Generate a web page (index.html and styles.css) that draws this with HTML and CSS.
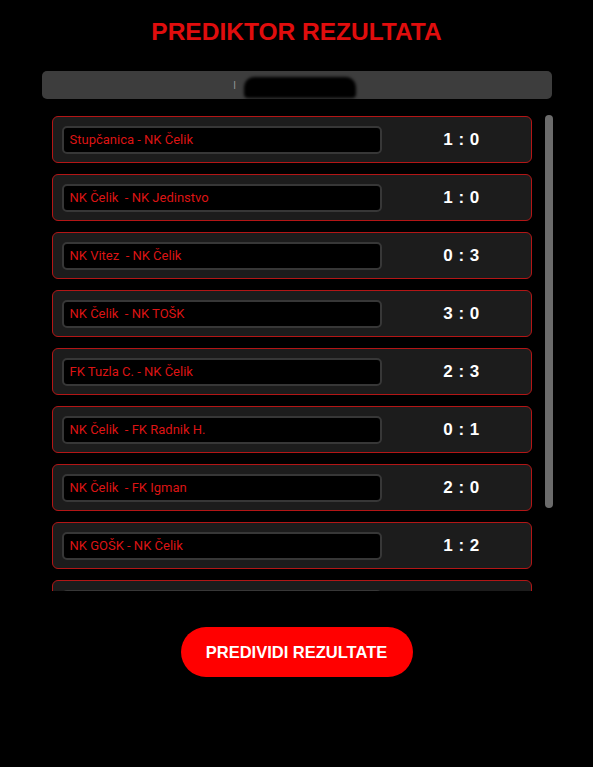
FILE: index.html
```html
<!DOCTYPE html>
<html lang="bs">
<head>
    <meta charset="UTF-8">
    <meta name="viewport" content="width=device-width, initial-scale=1.0">
    <title>Prediktor rezultata</title>
    <link rel="stylesheet" href="styles.css">
</head>
<body>
    <div class="app">
        <h1 class="title">PREDIKTOR REZULTATA</h1>
        <div class="user-bar">
            <span class="user-mark">l</span>
            <span class="user-name"></span>
        </div>
        <div class="list-wrap">
            <div class="match-list">
                <div class="match">
                    <input class="match-name" type="text" value="Stupčanica - NK Čelik">
                    <div class="score">1 : 0</div>
                </div>
                <div class="match">
                    <input class="match-name" type="text" value="NK Čelik  - NK Jedinstvo">
                    <div class="score">1 : 0</div>
                </div>
                <div class="match">
                    <input class="match-name" type="text" value="NK Vitez  - NK Čelik">
                    <div class="score">0 : 3</div>
                </div>
                <div class="match">
                    <input class="match-name" type="text" value="NK Čelik  - NK TOŠK">
                    <div class="score">3 : 0</div>
                </div>
                <div class="match">
                    <input class="match-name" type="text" value="FK Tuzla C. - NK Čelik">
                    <div class="score">2 : 3</div>
                </div>
                <div class="match">
                    <input class="match-name" type="text" value="NK Čelik  - FK Radnik H.">
                    <div class="score">0 : 1</div>
                </div>
                <div class="match">
                    <input class="match-name" type="text" value="NK Čelik  - FK Igman">
                    <div class="score">2 : 0</div>
                </div>
                <div class="match">
                    <input class="match-name" type="text" value="NK GOŠK - NK Čelik">
                    <div class="score">1 : 2</div>
                </div>
                <div class="match">
                    <input class="match-name" type="text" value="">
                    <div class="score"></div>
                </div>
            </div>
            <div class="scroll-rail">
                <div class="scroll-thumb"></div>
            </div>
        </div>
        <div class="actions">
            <button class="predict-btn">PREDIVIDI REZULTATE</button>
        </div>
    </div>
</body>
</html>
```

FILE: styles.css
```css
:root {
    --red: #ff0000;
    --card: #1c1c1c;
    --bar: #3d3d3d;
}

* {
    box-sizing: border-box;
}

body {
    margin: 0;
    background-color: #000;
    font-family: 'Liberation Sans', Arial, sans-serif;
}

.app {
    width: 510px;
    margin: 0 auto;
    padding-top: 18px;
}

.title {
    margin: 0;
    color: #e00d0d;
    font-size: 24.5px;
    font-weight: 700;
    text-align: center;
    line-height: 28px;
}

.user-bar {
    margin-top: 25px;
    height: 28px;
    background-color: var(--bar);
    border-radius: 5px;
    display: flex;
    justify-content: center;
    align-items: center;
}

.user-mark {
    color: #9a9a9a;
    font-size: 10px;
    margin-right: 8px;
    margin-left: -4px;
}

.user-name {
    display: block;
    width: 112px;
    height: 21px;
    margin-top: 4px;
    background-color: #000;
    border-radius: 10px 10px 4px 4px;
    filter: blur(1.5px);
}

.list-wrap {
    margin-top: 7px;
    width: 511px;
    display: flex;
    gap: 1px;
}

.match-list {
    flex: 1;
    height: 485px;
    overflow-y: hidden;
    padding: 10px 12px 10px 10px;
    display: flex;
    flex-direction: column;
    gap: 11px;
}

.scroll-rail {
    width: 8px;
    padding-top: 9px;
}

.scroll-thumb {
    height: 393px;
    background-color: #6b6b6b;
    border-radius: 4px;
}

.match {
    flex-shrink: 0;
    height: 47px;
    background-color: var(--card);
    border: 1px solid #b31616;
    border-radius: 6px;
    padding: 0 9px;
    display: flex;
    align-items: center;
    justify-content: space-between;
}

.match-name {
    width: 320px;
    height: 28px;
    background-color: #000;
    border: 2px solid #373737;
    border-radius: 5px;
    padding: 0 6px;
    color: #dc1414;
    font-family: Roboto, 'Open Sans', sans-serif;
    font-size: 13px;
    outline: none;
}

.score {
    width: 120px;
    color: #fff;
    font-size: 17px;
    font-weight: 700;
    text-align: center;
    letter-spacing: 0.5px;
}

.actions {
    display: flex;
    justify-content: center;
    margin-top: 36px;
}

.predict-btn {
    width: 232px;
    height: 50px;
    background-color: var(--red);
    border: none;
    border-radius: 25px;
    color: #fff;
    font-family: 'Liberation Sans', Arial, sans-serif;
    font-size: 16.5px;
    font-weight: 700;
    cursor: pointer;
}
```
